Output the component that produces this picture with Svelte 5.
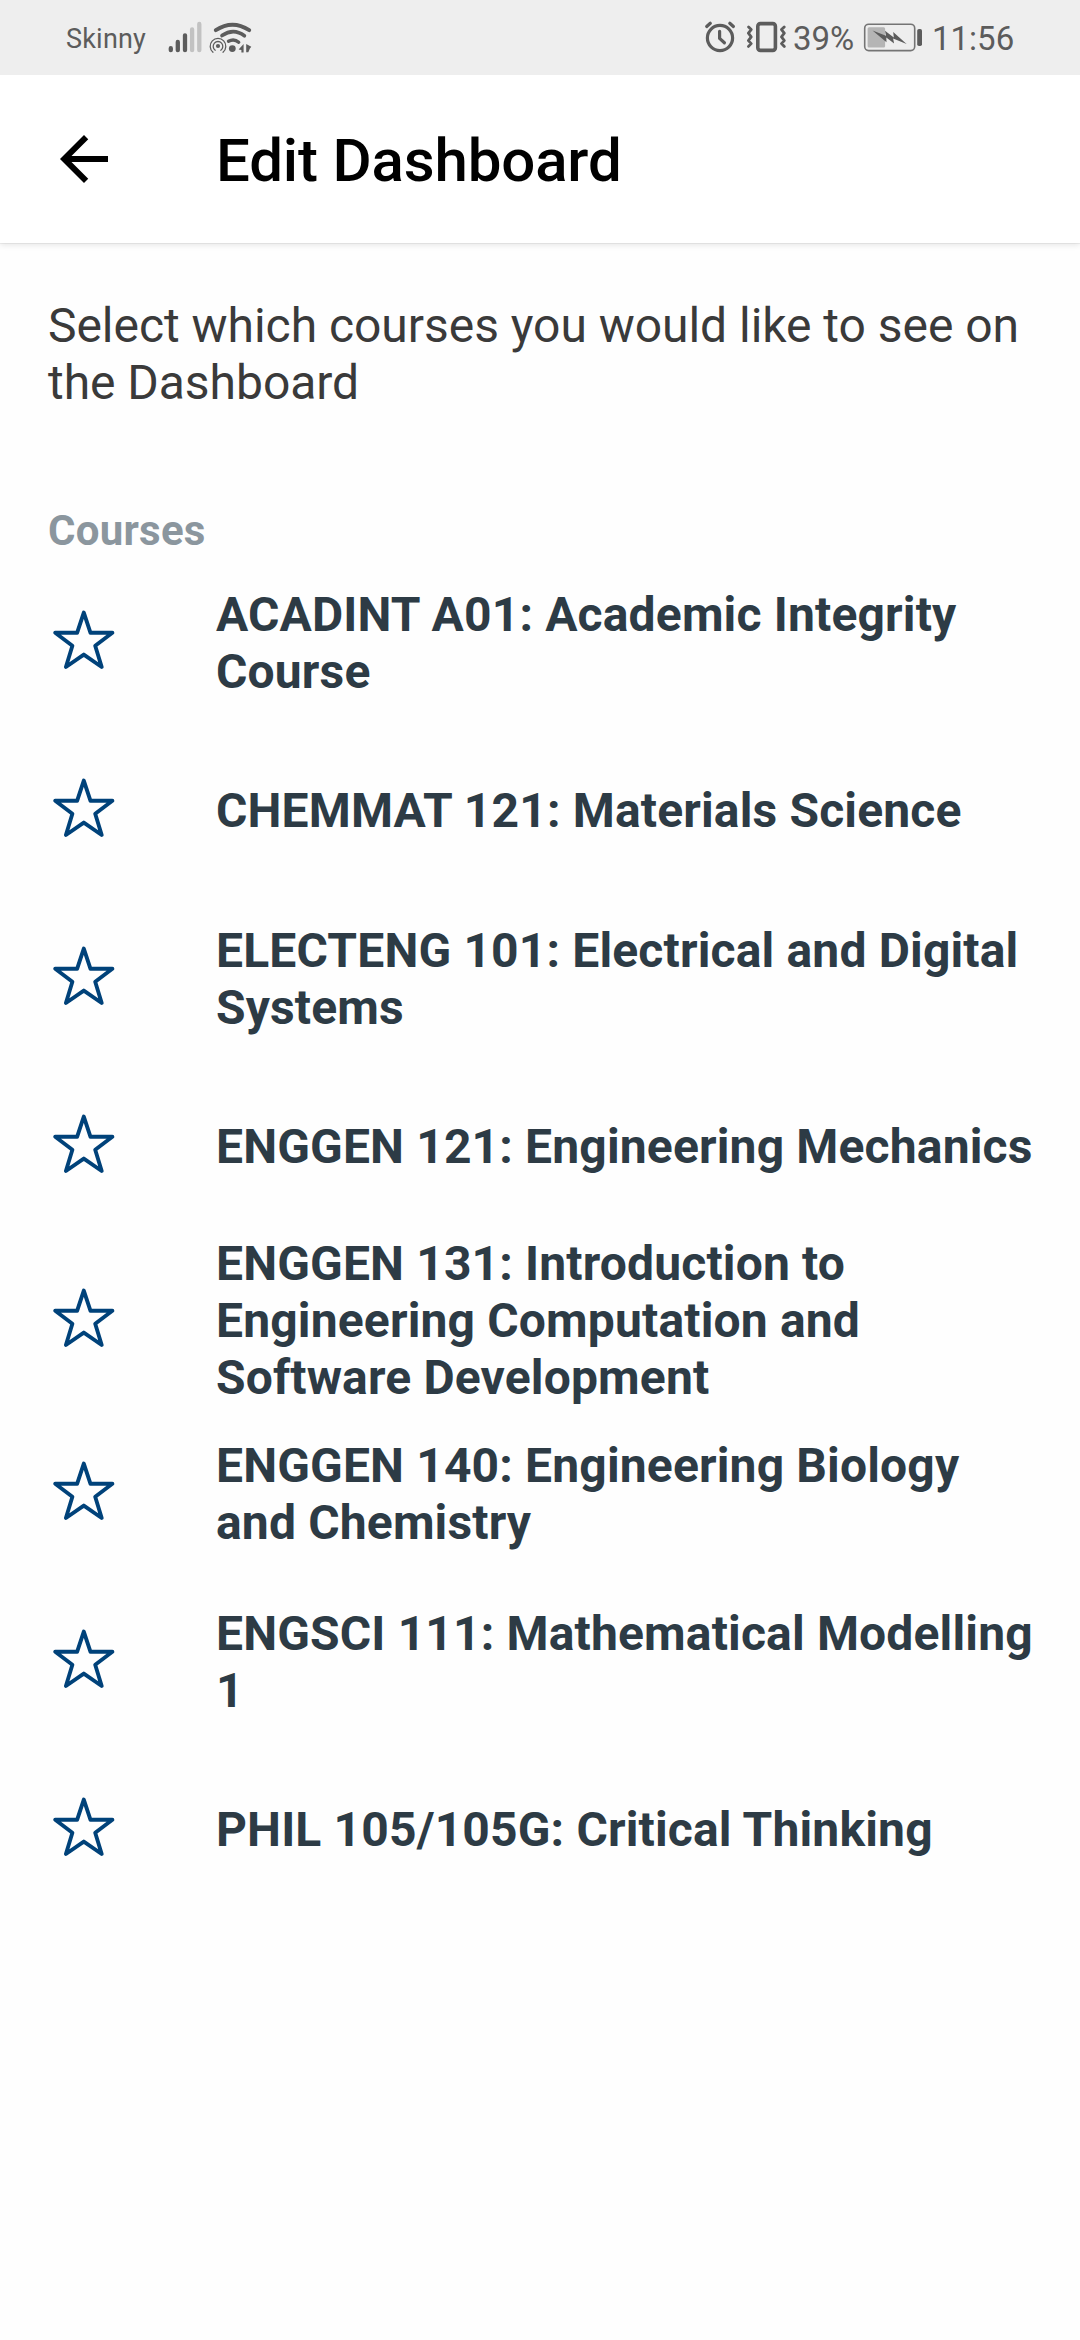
<script>
  const courses = [
    'ACADINT A01: Academic Integrity Course',
    'CHEMMAT 121: Materials Science',
    'ELECTENG 101: Electrical and Digital Systems',
    'ENGGEN 121: Engineering Mechanics',
    'ENGGEN 131: Introduction to Engineering Computation and Software Development',
    'ENGGEN 140: Engineering Biology and Chemistry',
    'ENGSCI 111: Mathematical Modelling 1',
    'PHIL 105/105G: Critical Thinking'
  ];
</script>

<div class="screen">
  <div class="status">
    <span class="carrier">Skinny</span>
    <svg class="network" width="90" height="40" viewBox="166 18 90 40" fill="none" stroke="#5c5c5c" stroke-linecap="round">
      <g stroke-width="4.3">
        <path d="M170.8 48.2v2M177.8 42v8.2M185 35.3v14.9" />
        <path d="M192.1 29.3v20.9M199.3 24v26.2" stroke="#c2c2c2" />
      </g>
      <path d="M215.8 30.2q16.7-11 33.4 0" stroke-width="3.8" />
      <path d="M222 35.6q11.5-8 22.4 0.2" stroke-width="3.6" />
      <path d="M228.5 41.2q5.6-3 10.2 1" stroke-width="3.4" />
      <circle cx="232.3" cy="48.6" r="3.4" fill="#5c5c5c" stroke="none" />
      <circle cx="218" cy="46" r="2.1" fill="#5c5c5c" stroke="none" />
      <path d="M215.2 50.2a4.8 4.8 0 1 1 5.6 0M213 52.2a7.8 7.8 0 1 1 10 0" stroke-width="1.3" />
      <path d="M243.6 43.9v8.6h-2.2v-2.6l-2.8-.5zM246.2 43.9l5.1 2.9-1.4 1.6-1.6 3.9h-2.1z" fill="#5c5c5c" stroke="none" />
    </svg>
    <div class="right">
      <svg width="84" height="40" viewBox="702 18 84 40" fill="none" stroke="#5c5c5c" stroke-linecap="round" stroke-linejoin="round">
        <circle cx="720" cy="38" r="12.6" stroke-width="3.2" />
        <path d="M719.6 31.3v7.1l4.8 4.4" stroke-width="3.2" />
        <path d="M706.7 26.5l3.6-3.2M733.4 26.5l-3.6-3.2" stroke-width="3.2" />
        <rect x="757.8" y="23.6" width="17.6" height="26.8" rx="2.6" stroke-width="3.6" />
        <path d="M748.6 27l2.6 2.6-2.8 3.6 2.8 3.7-2.8 3.7 2.8 3-2.7 2.8M784.2 27l-2.7 2.6 2.8 3.6-2.8 3.7 2.8 3.7-2.8 3 2.8 2.8" stroke-width="2.8" />
      </svg>
      <span class="percent">39%</span>
      <svg class="battery" width="60" height="32" viewBox="863 22 60 32">
        <rect x="864.7" y="24.2" width="50" height="26.4" rx="4" fill="none" stroke="#747474" stroke-width="1.6" />
        <rect x="867.6" y="27.2" width="17.5" height="20.4" rx="1.5" fill="#b5b5b5" />
        <path d="M872.5 30.5l13.5 5.2-1-5 8.8 6.8-.6-5.5 13.4 12-13.5-5.4 1 5-7.8-6.2.2 4.8z" fill="#5c5c5c" />
        <rect x="917.2" y="29" width="4.8" height="17" rx="1.8" fill="#5c5c5c" />
      </svg>
      <span class="clock">11:56</span>
    </div>
  </div>

  <header>
    <svg class="back" width="72" height="72" viewBox="0 0 24 24">
      <path d="M20 11H7.83l5.59-5.59L12 4l-8 8 8 8 1.41-1.41L7.83 13H20z" />
    </svg>
    <h1>Edit Dashboard</h1>
  </header>

  <main>
    <p>Select which courses you would like to see on the Dashboard</p>
    <h2>Courses</h2>
    <ul>
      {#each courses as course}
        <li>
          <svg class="star" width="72" height="72" viewBox="48 604 72 72">
            <path d="M83.8 612.6L90.5 632.8H112.4L95.2 645.8L101.7 667L83.8 654.6L65.9 667L72.4 645.8L55.2 632.8H77.1Z" />
          </svg>
          <span>{course}</span>
        </li>
      {/each}
    </ul>
  </main>
</div>

<style>
  :global(body) {
    margin: 0;
    background: #fff;
  }
  .screen {
    width: 1080px;
    height: 2340px;
    overflow: hidden;
    background: #fefefe;
    font-family: Roboto, 'Liberation Sans', sans-serif;
  }
  .status {
    box-sizing: border-box;
    height: 75px;
    padding: 0 65px 0 66px;
    display: flex;
    align-items: center;
    background: #eee;
    color: #5c5c5c;
  }
  .status svg {
    display: block;
    flex: none;
  }
  .carrier {
    width: 100px;
    font-size: 27px;
    letter-spacing: 0.2px;
    padding-top: 2px;
  }
  .right {
    margin-left: auto;
    display: flex;
    align-items: center;
    font-size: 33px;
  }
  .percent {
    width: 70px;
    padding-left: 7px;
    padding-top: 2px;
  }
  .clock {
    width: 83px;
    padding-left: 9px;
    padding-top: 2px;
    white-space: nowrap;
  }
  header {
    box-sizing: border-box;
    height: 168px;
    padding-left: 48px;
    display: flex;
    align-items: center;
    background: #fff;
    box-shadow: 0 1px 0 rgba(0, 0, 0, 0.05), 0 2px 6px rgba(0, 0, 0, 0.1);
    clip-path: inset(0 0 -12px 0);
  }
  h1 {
    margin: 4px 0 0 96px;
    font-size: 60px;
    font-weight: 500;
    line-height: 70px;
    letter-spacing: -0.15px;
    color: #000;
  }
  main {
    padding: 54px 48px 0;
  }
  p {
    margin: 0;
    font-size: 48px;
    line-height: 57px;
    letter-spacing: -0.04px;
    color: #3a3a3a;
  }
  h2 {
    margin: 94px 0 0;
    font-size: 42px;
    line-height: 51px;
    font-weight: 700;
    letter-spacing: 0.25px;
    color: #8b969e;
  }
  ul {
    list-style: none;
    margin: 0;
    padding: 0;
  }
  li {
    box-sizing: border-box;
    min-height: 168px;
    padding: 4px 0;
    display: flex;
    align-items: center;
    gap: 96px;
    font-size: 48px;
    line-height: 57px;
    font-weight: 700;
    letter-spacing: 0.16px;
    color: #2d3b45;
  }
  li span {
    flex: 1;
    margin: 2.75px -8px -2.75px 0;
  }
  .star {
    flex: none;
    fill: none;
    stroke: #00427a;
    stroke-width: 3.9;
    stroke-linejoin: round;
  }
</style>
